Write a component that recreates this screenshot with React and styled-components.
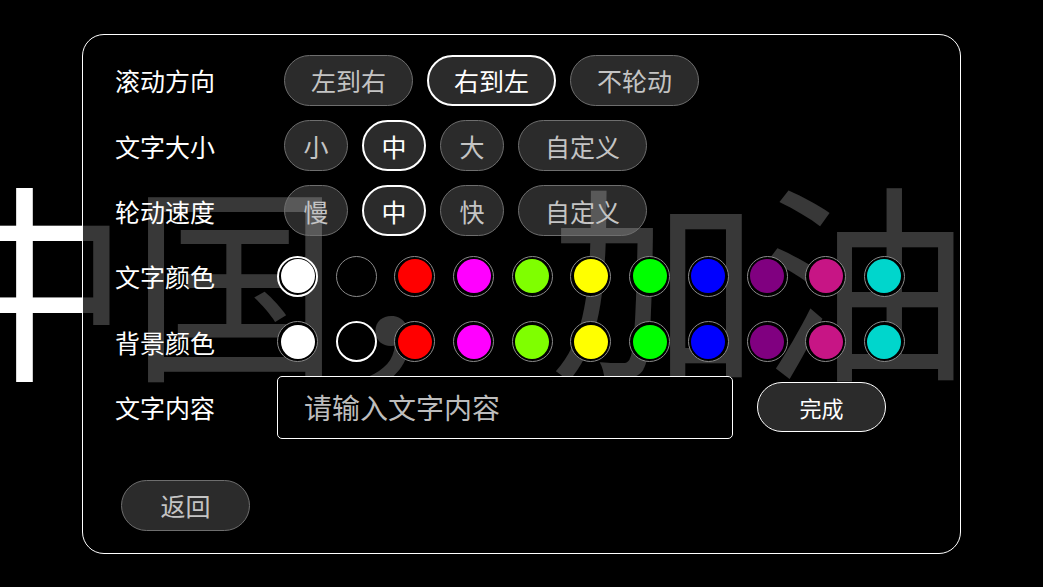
import React, { useState } from "react";
import styled, { createGlobalStyle } from "styled-components";

const GlobalStyle = createGlobalStyle`
  html, body {
    margin: 0;
    padding: 0;
    background: #000;
    overflow: hidden;
  }
  body {
    font-family: "Noto Sans CJK SC", "Noto Sans", sans-serif;
  }
`;

const Screen = styled.div`
  position: relative;
  width: 100vw;
  height: 100vh;
  background: #000;
  display: flex;
  align-items: center;
  justify-content: center;
  overflow: hidden;
`;

// the scrolling marquee text sitting under the settings panel
const Marquee = styled.div`
  position: absolute;
  left: -80px;
  top: 168px;
  font-size: 210px;
  line-height: 1;
  color: #fff;
  white-space: nowrap;
  z-index: 0;
`;

const Panel = styled.div`
  position: relative;
  z-index: 1;
  box-sizing: border-box;
  width: 879px;
  height: 520px;
  border: 1.5px solid #fff;
  border-radius: 22px;
  background: rgba(0, 0, 0, 0.78);
  padding: 13px 0 0 32px;
  display: flex;
  flex-direction: column;
`;

const Row = styled.div`
  display: flex;
  align-items: center;
  height: 65.4px;
`;

const Label = styled.div`
  width: 162px;
  flex-shrink: 0;
  color: #fff;
  font-size: 25px;
`;

const Group = styled.div`
  display: flex;
  align-items: center;
  gap: 14px;
  padding-left: ${(p) => p.$indent || 0}px;
`;

const Pill = styled.button`
  box-sizing: border-box;
  width: ${(p) => (p.$narrow ? 64 : 129)}px;
  height: 51px;
  border-radius: 26px;
  border: ${(p) => (p.$active ? "2px solid #fff" : "1.5px solid #6e6e6e")};
  background: rgba(255, 255, 255, 0.17);
  color: ${(p) => (p.$active ? "#fff" : "#c4c4c4")};
  font-family: inherit;
  font-size: ${(p) => p.$size || 25}px;
  padding: 0;
  cursor: pointer;
`;

const Swatches = styled.div`
  display: flex;
  align-items: center;
  gap: 17.7px;
`;

const Swatch = styled.div`
  box-sizing: border-box;
  width: 41px;
  height: 41px;
  border-radius: 50%;
  border: ${(p) => (p.$active ? "2px solid #fff" : "1.5px solid #8a8a8a")};
  background: #000;
  padding: ${(p) => (p.$active ? 1.5 : 2.5)}px;
  cursor: pointer;
  &::after {
    content: "";
    display: block;
    width: 100%;
    height: 100%;
    border-radius: 50%;
    background: ${(p) => p.$color};
  }
`;

const TextInput = styled.input`
  box-sizing: border-box;
  width: 456px;
  height: 63px;
  border: 1.5px solid #fff;
  border-radius: 5px;
  background: #000;
  color: #fff;
  font-family: inherit;
  font-size: 28px;
  padding: 0 0 0 26px;
  outline: none;
  &::placeholder {
    color: #bdbdbd;
  }
`;

const Done = styled(Pill)`
  margin-left: 24px;
  height: 50px;
  border: 1.5px solid #fff;
  color: #fff;
`;

const Footer = styled.div`
  margin-top: 40px;
  padding-left: 6px;
`;

const colors = [
  "#ffffff",
  "#000000",
  "#ff0000",
  "#ff00ff",
  "#7fff00",
  "#ffff00",
  "#00ff00",
  "#0000ff",
  "#800080",
  "#c71585",
  "#00d6cc",
];

const OptionRow = ({ label, options, value, onChange }) => (
  <Row>
    <Label>{label}</Label>
    <Group $indent={7}>
      {options.map((o) => (
        <Pill
          key={o}
          $narrow={o.length === 1}
          $active={o === value}
          onClick={() => onChange(o)}
        >
          {o}
        </Pill>
      ))}
    </Group>
  </Row>
);

const ColorRow = ({ label, value, onChange }) => (
  <Row>
    <Label>{label}</Label>
    <Swatches>
      {colors.map((c) => (
        <Swatch
          key={c}
          $color={c}
          $active={c === value}
          onClick={() => onChange(c)}
        />
      ))}
    </Swatches>
  </Row>
);

export default function App() {
  const [direction, setDirection] = useState("右到左");
  const [size, setSize] = useState("中");
  const [speed, setSpeed] = useState("中");
  const [textColor, setTextColor] = useState("#ffffff");
  const [bgColor, setBgColor] = useState("#000000");
  const [content, setContent] = useState("");

  return (
    <Screen>
      <GlobalStyle />
      <Marquee>中国，加油</Marquee>
      <Panel>
        <OptionRow
          label="滚动方向"
          options={["左到右", "右到左", "不轮动"]}
          value={direction}
          onChange={setDirection}
        />
        <OptionRow
          label="文字大小"
          options={["小", "中", "大", "自定义"]}
          value={size}
          onChange={setSize}
        />
        <OptionRow
          label="轮动速度"
          options={["慢", "中", "快", "自定义"]}
          value={speed}
          onChange={setSpeed}
        />
        <ColorRow label="文字颜色" value={textColor} onChange={setTextColor} />
        <ColorRow label="背景颜色" value={bgColor} onChange={setBgColor} />
        <Row>
          <Label>文字内容</Label>
          <TextInput
            placeholder="请输入文字内容"
            value={content}
            onChange={(e) => setContent(e.target.value)}
          />
          <Done $size={22}>完成</Done>
        </Row>
        <Footer>
          <Pill>返回</Pill>
        </Footer>
      </Panel>
    </Screen>
  );
}
